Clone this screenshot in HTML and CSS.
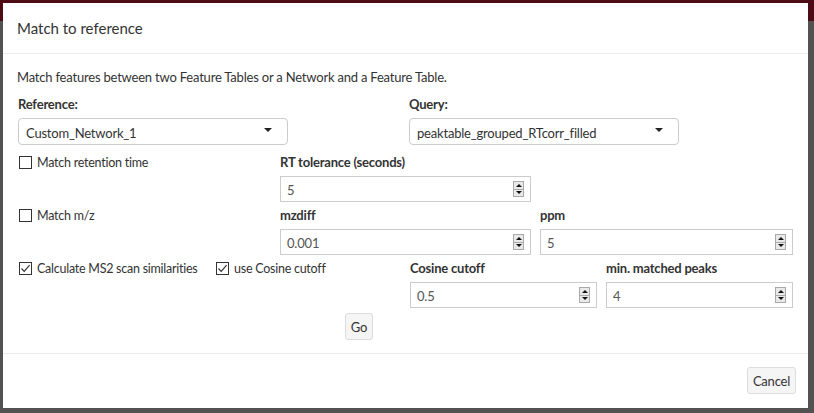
FILE: index.html
```html
<!DOCTYPE html>
<html>
<head>
<meta charset="utf-8">
<link rel="stylesheet" href="styles.css">
</head>
<body>
<div class="modal">
  <div class="modal-header"><h4 class="title">Match to reference</h4></div>
  <div class="modal-body">
    <p class="intro">Match features between two Feature Tables or a Network and a Feature Table.</p>
    <div class="row row-top">
      <div class="field">
        <div class="flabel">Reference:</div>
        <div class="select"><span>Custom_Network_1</span><i class="caret"></i></div>
      </div>
      <div class="field">
        <div class="flabel">Query:</div>
        <div class="select"><span>peaktable_grouped_RTcorr_filled</span><i class="caret"></i></div>
      </div>
    </div>

    <div class="row row-rt">
      <label class="check"><span class="box"></span>Match retention time</label>
      <div class="field">
        <div class="flabel">RT tolerance (seconds)</div>
        <div class="num"><span>5</span><span class="spin"><i class="up"></i><i class="down"></i></span></div>
      </div>
    </div>

    <div class="row row-mz">
      <label class="check"><span class="box"></span>Match m/z</label>
      <div class="field">
        <div class="flabel">mzdiff</div>
        <div class="num"><span>0.001</span><span class="spin"><i class="up"></i><i class="down"></i></span></div>
      </div>
      <div class="field">
        <div class="flabel">ppm</div>
        <div class="num"><span>5</span><span class="spin"><i class="up"></i><i class="down"></i></span></div>
      </div>
    </div>

    <div class="row row-ms2">
      <label class="check"><span class="box checked"><svg viewBox="0 0 13 13" width="13" height="13"><path d="M2.5 6.5 L5.2 9.3 L10.6 3.2" fill="none" stroke="#333" stroke-width="1.2"/></svg></span>Calculate MS2 scan similarities</label>
      <label class="check"><span class="box checked"><svg viewBox="0 0 13 13" width="13" height="13"><path d="M2.5 6.5 L5.2 9.3 L10.6 3.2" fill="none" stroke="#333" stroke-width="1.2"/></svg></span>use Cosine cutoff</label>
      <div class="field">
        <div class="flabel">Cosine cutoff</div>
        <div class="num"><span>0.5</span><span class="spin"><i class="up"></i><i class="down"></i></span></div>
      </div>
      <div class="field">
        <div class="flabel">min. matched peaks</div>
        <div class="num"><span>4</span><span class="spin"><i class="up"></i><i class="down"></i></span></div>
      </div>
    </div>

    <div class="go-row"><button class="btn btn-go">Go</button></div>
  </div>
  <div class="modal-footer"><button class="btn btn-cancel">Cancel</button></div>
</div>
</body>
</html>
```
FILE: styles.css
```css
html, body { margin: 0; }
body {
  width: 814px;
  height: 413px;
  overflow: hidden;
  padding: 3px 0 0 3px;
  box-sizing: border-box;
  background: linear-gradient(#4d0b16 0, #4d0b16 21px, #525252 21px);
  font-family: Lato, "Open Sans", sans-serif;
  font-size: 13px;
  letter-spacing: -0.2px;
  color: #333;
}
.modal {
  width: 805px;
  height: 405px;
  background: #fff;
  display: flex;
  flex-direction: column;
}
.modal-header {
  height: 51px;
  box-sizing: border-box;
  border-bottom: 1px solid #ececec;
  display: flex;
  align-items: center;
  padding: 0 14px;
}
.title {
  margin: 0;
  font-size: 15px;
  font-weight: 400;
  letter-spacing: 0;
  color: #333;
}
.modal-body {
  padding: 14px 15px 13px 15px;
  flex: 1;
}
.intro {
  margin: 0 0 9px -1px;
  line-height: 19px;
}
.row {
  display: grid;
  column-gap: 9px;
  align-items: start;
}
.row-top { grid-template-columns: 270px 270px; column-gap: 121px; }
.row-rt { grid-template-columns: 253px 251px; margin-top: 9px; }
.row-mz { grid-template-columns: 253px 251px 253px; margin-top: 5px; }
.row-ms2 { grid-template-columns: 188px 186px 187px 187px; margin-top: 5px; }
.flabel {
  font-weight: 700;
  line-height: 17px;
  margin-bottom: 5px;
}
.select {
  height: 27px;
  box-sizing: border-box;
  border: 1px solid #ccc;
  border-radius: 4px;
  display: flex;
  align-items: flex-end;
  justify-content: space-between;
  padding: 0 15px 2px 7px;
  line-height: 17px;
}
.caret {
  width: 0; height: 0;
  border-left: 4px solid transparent;
  border-right: 4px solid transparent;
  border-top: 4px solid #222;
  align-self: center;
  margin-top: -2px;
}
.num {
  height: 26px;
  box-sizing: border-box;
  border: 1px solid #ccc;
  display: flex;
  align-items: center;
  justify-content: space-between;
  padding: 1px 6px 0 6px;
  color: #555;
}
.spin {
  width: 11px;
  height: 16px;
  display: flex;
  flex-direction: column;
  border: 1px solid #a9a9a9;
  box-sizing: border-box;
  background: #e9e9e9;
  margin-top: -1px;
}
.spin i {
  flex: 1;
  display: flex;
  align-items: center;
  justify-content: center;
}
.spin i.up { border-bottom: 1px solid #a9a9a9; }
.spin i.up::before {
  content: "";
  border-left: 3px solid transparent;
  border-right: 3px solid transparent;
  border-bottom: 3px solid #111;
}
.spin i.down::before {
  content: "";
  border-left: 3px solid transparent;
  border-right: 3px solid transparent;
  border-top: 3px solid #111;
}
.check {
  display: flex;
  align-items: center;
  line-height: 17px;
  margin-left: 1px;
  white-space: nowrap;
  font-size: 12.5px;
  letter-spacing: -0.25px;
}
.box {
  width: 13px;
  height: 13px;
  box-sizing: border-box;
  border: 1px solid #333;
  margin-right: 5px;
  position: relative;
  flex: none;
}
.box svg { position: absolute; left: -1px; top: -1px; }
.go-row { padding-left: 327px; margin-top: 5px; }
.btn {
  font-family: inherit;
  font-size: 13px;
  letter-spacing: -0.2px;
  color: #333;
  background: #f5f5f5;
  border: 1px solid #ddd;
  border-radius: 3px;
  height: 27px;
  padding: 0 6px;
  margin: 0;
}
.btn-go { width: 28px; padding: 0; }
.modal-footer {
  border-top: 1px solid #ececec;
  height: 55px;
  box-sizing: border-box;
  display: flex;
  justify-content: flex-end;
  align-items: flex-start;
  padding: 13px 12px 0 0;
}
.btn-cancel { width: 49px; padding: 0; }
```
